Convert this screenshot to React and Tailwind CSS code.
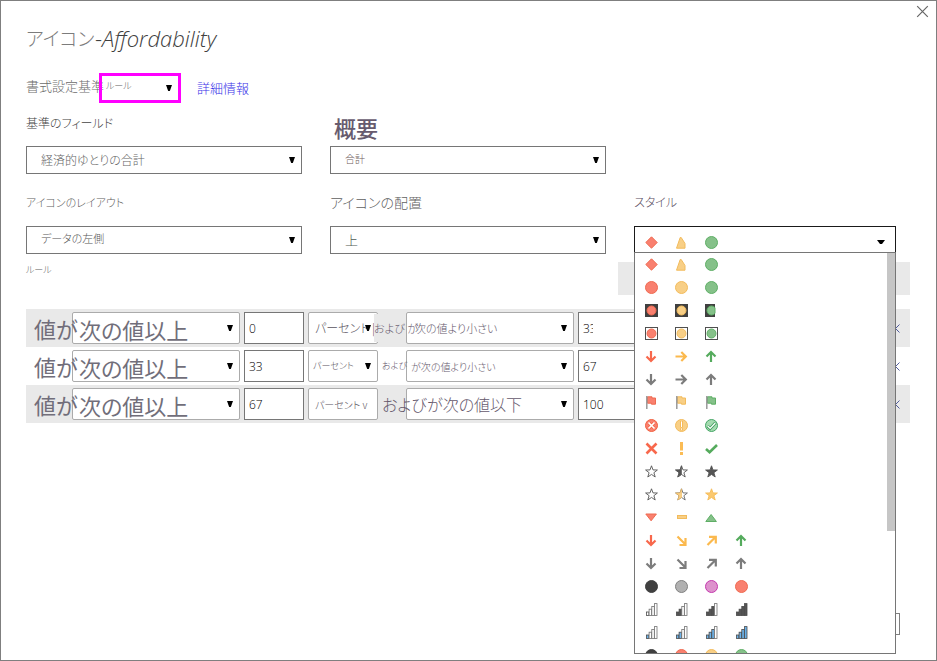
import React from "react";

const RED = { fill: "#f9806f", stroke: "#ee6a50" };
const YELLOW = { fill: "#f8cf86", stroke: "#f2bb5c" };
const GREEN = { fill: "#85c189", stroke: "#5fae66" };
const DARK = { fill: "#404040", stroke: "#404040" };
const GRAY = { fill: "#b1b1b1", stroke: "#808080" };
const PINK = { fill: "#dd92cc", stroke: "#c43aae" };

const STAR = "M6.5 .8 L8 4.9 L12.4 5 L8.9 7.7 L10.2 12 L6.5 9.4 L2.8 12 L4.1 7.7 L.6 5 L5 4.9 Z";
const HALF_STAR = "M6.5 .8 L6.5 9.4 L2.8 12 L4.1 7.7 L.6 5 L5 4.9 Z";

function Svg({ children }) {
  return (
    <svg className="block shrink-0" width="13" height="13" viewBox="0 0 13 13" fill="none" aria-hidden="true">
      {children}
    </svg>
  );
}

const circle = (c) => (
  <Svg>
    <circle cx="6.5" cy="6.5" r="6" {...c} />
  </Svg>
);

const diamond = () => (
  <Svg>
    <path d="M6.5 .8 L12.2 6.5 L6.5 12.2 L.8 6.5 Z" {...RED} />
  </Svg>
);

const triangle = () => (
  <Svg>
    <path d="M5.2 1.5 H6.2 L10 7.5 V12.2 H1.5 Z" {...YELLOW} />
  </Svg>
);

const darkBox = (c, w = 13) => (
  <Svg>
    <rect width={w} height="13" fill="#404040" />
    <path
      d={w === 13 ? "M6.5 2 a4.5 4.5 0 0 1 0 9 a4.5 4.5 0 0 1 0 -9 Z" : "M10 3.7 a4.5 4.5 0 1 0 0 5.6 Z"}
      {...c}
    />
  </Svg>
);

const outlineBox = (c) => (
  <Svg>
    <rect x=".5" y=".5" width="12" height="12" fill="#fff" stroke="#505050" />
    <circle cx="6.5" cy="6.5" r="4.5" {...c} />
  </Svg>
);

const ARROWS = {
  down: "M6 1 V11 M1.5 6.5 L6 11 L10.5 6.5",
  up: "M6 12 V2 M1.5 6.5 L6 2 L10.5 6.5",
  right: "M.5 6.5 H11 M6.3 2 L10.8 6.5 L6.3 11",
  downRight: "M2.5 2.5 L10 10 M10.5 4 V11 H4.5",
  upRight: "M2.5 11 L10 3.5 M4 2.8 H10.8 V9.5",
};

const arrow = (dir, color) => (
  <Svg>
    <path d={ARROWS[dir]} stroke={color} strokeWidth="2.2" />
  </Svg>
);

const flag = (c) => (
  <Svg>
    <path d="M2.5 .8 H7 V2 H10.5 V8.2 H6.5 V7.2 H2.5 Z" {...c} />
    <path d="M1.8 0 V13" stroke="#999" strokeWidth="1.5" />
  </Svg>
);

const circleCross = () => (
  <Svg>
    <circle cx="6.5" cy="6.5" r="6" fill="#f9806f" stroke="#f0603f" />
    <path d="M3.8 3.8 L9.2 9.2 M9.2 3.8 L3.8 9.2" stroke="#f0603f" strokeWidth="3" />
    <path d="M3.5 3.5 L9.5 9.5 M9.5 3.5 L3.5 9.5" stroke="#fff" strokeWidth="1.7" />
  </Svg>
);

const circleBang = () => (
  <Svg>
    <circle cx="6.5" cy="6.5" r="6" {...YELLOW} />
    <path d="M6.5 2 V8.4 M6.5 9.2 V11.2" stroke="#f5b54c" strokeWidth="2.6" />
    <path d="M6.5 2.4 V8 M6.5 9.4 V10.8" stroke="#fff" strokeWidth="1" />
  </Svg>
);

const circleCheck = () => (
  <Svg>
    <circle cx="6.5" cy="6.5" r="6" fill="#a5dbb0" stroke="#45a565" />
    <path d="M2.5 7 L5.2 9.5 L10.5 3.8" stroke="#3f9d5c" strokeWidth="3" />
    <path d="M2.7 7.1 L5.2 9.4 L10.3 4" stroke="#fff" strokeWidth="1.3" />
  </Svg>
);

const cross = () => (
  <Svg>
    <path d="M1.5 1.5 L11.5 11.5 M11.5 1.5 L1.5 11.5" stroke="#f8684c" strokeWidth="2.6" />
  </Svg>
);

const bang = () => (
  <Svg>
    <path d="M6.5 0 V8.5 M6.5 10 V13" stroke="#fbbc55" strokeWidth="3" />
  </Svg>
);

const check = () => (
  <Svg>
    <path d="M1 7 L4.6 10.3 L12 3" stroke="#55ab5d" strokeWidth="2.6" />
  </Svg>
);

const star = (fill, stroke, half) => (
  <Svg>
    <path d={STAR} fill={half ? "#fff" : fill} stroke={stroke} strokeWidth=".9" />
    {half && <path d={HALF_STAR} fill={fill} stroke={half} strokeWidth=".6" />}
  </Svg>
);

const smallDown = () => (
  <Svg>
    <path d="M.8 3 H11.4 L6.1 9.8 Z" {...RED} />
  </Svg>
);

const dash = () => (
  <Svg>
    <rect x="2.5" y="4.5" width="9" height="3" {...YELLOW} />
  </Svg>
);

const smallUp = () => (
  <Svg>
    <path d="M.8 10.5 H11.4 L6.1 3.5 Z" {...GREEN} />
  </Svg>
);

const bars = (count, fill) => (
  <Svg>
    {[0, 1, 2, 3].map((i) => (
      <rect
        key={i}
        x={1.4 + i * 2.7}
        y={9 - i * 2.8}
        width="2.5"
        height={3.5 + i * 2.8}
        fill={i < count ? fill : "#fff"}
        stroke={i < count ? "#4a4a4a" : "#707070"}
        strokeWidth=".8"
      />
    ))}
  </Svg>
);

const A_RED = "#f8684c";
const A_YEL = "#fbb94e";
const A_GRN = "#55ab5d";
const A_GRY = "#7c7c7c";

const ICON_SETS = [
  [diamond(), triangle(), circle(GREEN)],
  [circle(RED), circle(YELLOW), circle(GREEN)],
  [darkBox(RED), darkBox(YELLOW), darkBox(GREEN, 10)],
  [outlineBox(RED), outlineBox(YELLOW), outlineBox(GREEN)],
  [arrow("down", A_RED), arrow("right", A_YEL), arrow("up", A_GRN)],
  [arrow("down", A_GRY), arrow("right", A_GRY), arrow("up", A_GRY)],
  [flag(RED), flag(YELLOW), flag(GREEN)],
  [circleCross(), circleBang(), circleCheck()],
  [cross(), bang(), check()],
  [star("#fff", "#555"), star("#555", "#555", "#555"), star("#555", "#555")],
  [star("#fff", "#555"), star("#f8cf86", "#666", "#f2bb5c"), star("#fbc96f", "#f5bb58")],
  [smallDown(), dash(), smallUp()],
  [arrow("down", A_RED), arrow("downRight", A_YEL), arrow("upRight", A_YEL), arrow("up", A_GRN)],
  [arrow("down", A_GRY), arrow("downRight", A_GRY), arrow("upRight", A_GRY), arrow("up", A_GRY)],
  [circle(DARK), circle(GRAY), circle(PINK), circle(RED)],
  [bars(1, "#fff"), bars(2, "#555"), bars(3, "#555"), bars(4, "#555")],
  [bars(1, "#6db3ea"), bars(2, "#6db3ea"), bars(3, "#6db3ea"), bars(4, "#6db3ea")],
  [circle(DARK), circle(RED), circle(YELLOW), circle(GREEN)],
];

function IconSet({ icons }) {
  return (
    <span className="flex items-center gap-[17px]">
      {icons.map((icon, i) => (
        <React.Fragment key={i}>{icon}</React.Fragment>
      ))}
    </span>
  );
}

function Select({ id, label, value, box, text, caret = true }) {
  return (
    <div className={`relative ${box}`}>
      <select
        id={id}
        aria-label={label}
        className={`block h-full w-full appearance-none bg-transparent outline-none ${text}`}
      >
        <option>{value}</option>
      </select>
      {caret && (
        <svg
          className="pointer-events-none absolute top-1/2 right-[6px] -mt-[3px]"
          width="6"
          height="6"
          viewBox="0 0 6 6"
          aria-hidden="true"
        >
          <path d="M0 0 H6 L3.8 6 H2.2 Z" fill="#000" />
        </svg>
      )}
    </div>
  );
}

const FIELD_BOX = "h-7 border border-[#767676] bg-white";
const RULE_BOX = "h-8 shrink-0 rounded-[2px] border border-[#ababab] bg-white";
const NUMBER =
  "h-8 w-[60px] shrink-0 border border-[#767676] bg-white pl-1 font-['Open_Sans',sans-serif] text-[12px] text-black outline-none";

const RULES = [
  {
    from: "0",
    to: "33",
    toPad: "pr-[44px]",
    stripe: "bg-[#e9e9e9]",
    unit: "パーセント |",
    unitText: "pl-1.5 text-[12px]",
    caret: true,
    join: "および が",
    joinText: "h-7 bg-[#e9e9e9] text-[11px]",
    upper: "次の値より小さい",
    upperText: "pl-2 text-[11px]",
  },
  {
    from: "33",
    to: "67",
    toPad: "",
    stripe: "",
    unit: "パーセント",
    unitText: "pl-1 text-[9px]",
    caret: true,
    join: "および",
    joinText: "pl-2 text-[9px]",
    upper: "が次の値より小さい",
    upperText: "pl-1 text-[10px]",
  },
  {
    from: "67",
    to: "100",
    toPad: "",
    stripe: "bg-[#e9e9e9]",
    unit: "パーセント v",
    unitText: "pl-1.5 text-[10px]",
    caret: false,
    join: "および",
    joinText: "pl-2 text-[16px]",
    upper: "が次の値以下",
    upperText: "pl-5 text-[16px]",
  },
];

function RuleRow({ rule, index }) {
  return (
    <div className={`flex h-[38px] items-center ${rule.stripe}`}>
      <label
        htmlFor={`lower-${index}`}
        className="relative z-10 w-[46px] shrink-0 pl-2 text-[22px] leading-8 font-normal whitespace-nowrap text-[#716e7a]"
      >
        値が
      </label>
      <Select
        id={`lower-${index}`}
        value="次の値以上"
        box={`${RULE_BOX} w-[168px]`}
        text="pl-1.5 text-[22px] leading-8 font-normal text-[#716e7a]"
      />
      <input aria-label="下限値" defaultValue={rule.from} className={`${NUMBER} ml-1`} />
      <Select
        label="単位"
        value={rule.unit}
        box={`${RULE_BOX} ml-1 w-[70px]`}
        text={`text-[#5a5460] ${rule.unitText}`}
        caret={rule.caret}
      />
      <label
        htmlFor={`upper-${index}`}
        className={`relative z-10 -ml-1 flex w-8 shrink-0 items-center whitespace-nowrap text-[#65586c] ${rule.joinText}`}
      >
        {rule.join}
      </label>
      <Select
        id={`upper-${index}`}
        value={rule.upper}
        box={`${RULE_BOX} w-[168px]`}
        text={`text-[#65586c] ${rule.upperText}`}
      />
      <input aria-label="上限値" defaultValue={rule.to} className={`${NUMBER} ml-1 ${rule.toPad}`} />
      <button type="button" aria-label="削除" className="mr-[10px] ml-auto flex h-4 w-[10px] items-center justify-center">
        <svg width="9" height="9" viewBox="0 0 9 9" aria-hidden="true">
          <path d="M.5 .5 L8.5 8.5 M8.5 .5 L.5 8.5" stroke="#4f5a9c" strokeWidth="1" />
        </svg>
      </button>
    </div>
  );
}

export default function App() {
  return (
    <main className="flex min-h-screen flex-col border border-[#7f7f7f] bg-white font-['Noto_Sans_CJK_JP',sans-serif] font-light text-[#5f5f5f] [font-feature-settings:'palt']">
      <div className="flex h-[21px] justify-end pt-1 pr-[7px]">
        <button type="button" aria-label="閉じる" className="h-[13px] w-[13px]">
          <svg width="13" height="13" viewBox="0 0 13 13" aria-hidden="true">
            <path d="M1.2 1.2 L11.8 11.8 M11.8 1.2 L1.2 11.8" stroke="#666" strokeWidth="1.2" />
          </svg>
        </button>
      </div>

      <div className="flex flex-1 flex-col pr-[26px] pl-[25px]">
        <h1 className="flex h-8 items-center text-[19px] leading-8 whitespace-nowrap text-[#7c7c7c]">
          <span className="w-[69px]">アイコン</span>
          <span className="font-['Open_Sans',sans-serif] text-[22px] text-[#404040]">
            -<em>Affordability</em>
          </span>
        </h1>

        <div className="mt-[19px] flex h-[30px] items-center">
          <label htmlFor="format-by" className="w-[73px] pb-1 text-[13px] leading-5 whitespace-nowrap text-[#6c6c6c]">
            書式設定基準
          </label>
          <Select
            id="format-by"
            value="ルール"
            box="h-[30px] w-[82px] border-3 border-[#ff00ff]"
            text="pb-1 pl-1 text-[9px] text-[#5f5f5f]"
          />
          <a href="#" className="ml-4 text-[13px] leading-5 text-[#3a32e8]">
            詳細情報
          </a>
        </div>

        <div className="grid grid-cols-[276fr_276fr_262fr] gap-x-7 pr-[14px]">
          <div>
            <label htmlFor="field" className="flex h-[43px] items-center pb-1 text-[12px] leading-5 text-[#444]">
              基準のフィールド
            </label>
            <Select id="field" value="経済的ゆとりの合計" box={FIELD_BOX} text="pl-[14px] text-[12px] text-[#666]" />
          </div>
          <div>
            <label
              htmlFor="summary"
              className="flex h-[43px] items-center pt-1 pl-1 text-[22px] leading-8 font-medium text-[#675b6e]"
            >
              概要
            </label>
            <Select id="summary" value="合計" box={FIELD_BOX} text="pb-1 pl-[14px] text-[10px] text-[#6d5b5b]" />
          </div>
          <div />

          <div>
            <label htmlFor="layout" className="flex h-[52px] items-center pt-1 text-[11px] leading-5">
              アイコンのレイアウト
            </label>
            <Select id="layout" value="データの左側" box={FIELD_BOX} text="pb-1 pl-[14px] text-[11px] text-[#555]" />
          </div>
          <div>
            <label htmlFor="placement" className="flex h-[52px] items-center pt-1 text-[14px] leading-5">
              アイコンの配置
            </label>
            <Select id="placement" value="上" box={FIELD_BOX} text="pl-[14px] text-[13px] text-[#4f5b53]" />
          </div>
          <div>
            <div id="style-label" className="flex h-[52px] items-center pt-1 text-[12px] leading-5 text-[#574b5e]">
              スタイル
            </div>
            <div className="relative z-20">
              <button
                type="button"
                aria-labelledby="style-label"
                aria-haspopup="listbox"
                aria-expanded="true"
                className="flex h-7 w-full items-center justify-between border border-[#1a1a1a] bg-white pt-1 pr-[10px] pl-[10px]"
              >
                <IconSet icons={ICON_SETS[0]} />
                <svg width="8" height="4" viewBox="0 0 8 4" aria-hidden="true">
                  <path d="M0 0 H8 L5 4 H3 Z" fill="#000" />
                </svg>
              </button>
              <div className="absolute inset-x-0 top-[26px] flex h-[402px] overflow-hidden border border-[#767676] bg-white">
                <ul role="listbox" aria-labelledby="style-label" className="flex-1">
                  {ICON_SETS.map((icons, i) => (
                    <li key={i} role="option" aria-selected={i === 0} className="flex h-[23px] items-center pl-[10px]">
                      <IconSet icons={icons} />
                    </li>
                  ))}
                </ul>
                <div className="h-[278px] w-2 bg-[#c6c6c6]" />
              </div>
            </div>
          </div>
        </div>

        <section className="mt-2">
          <div className="mb-[14px] flex h-[33px] items-start justify-between">
            <h2 className="text-[9px] leading-4">ルール</h2>
            <div className="h-full w-[292px] bg-[#e9e9e9]" />
          </div>
          {RULES.map((rule, i) => (
            <RuleRow key={i} rule={rule} index={i} />
          ))}
        </section>

        <div className="mt-auto mr-[10px] mb-[25px] flex justify-end">
          <button type="button" aria-label="キャンセル" className="h-[22px] w-[72px] border border-[#7f7f7f] bg-white" />
        </div>
      </div>
    </main>
  );
}
